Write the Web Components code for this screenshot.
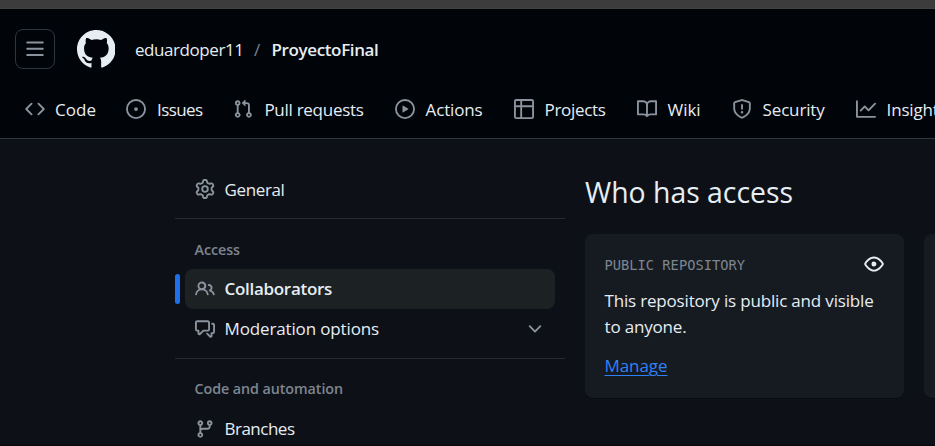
<!DOCTYPE html>
<html lang="en">
<head>
<meta charset="utf-8">
<title>ProyectoFinal settings</title>
<style>
html,body{margin:0;height:100%;overflow:hidden;background:#0d1117}
body{font-family:"Open Sans","Noto Sans",sans-serif;color:#e6edf3;font-size:17px}
</style>
</head>
<body>
<settings-page></settings-page>
<script>
const ICONS = {
 menu:'<path d="M1 2.75A.75.75 0 0 1 1.75 2h12.5a.75.75 0 0 1 0 1.5H1.75A.75.75 0 0 1 1 2.75Zm0 5A.75.75 0 0 1 1.75 7h12.5a.75.75 0 0 1 0 1.5H1.75A.75.75 0 0 1 1 7.75ZM1.75 12h12.5a.75.75 0 0 1 0 1.5H1.75a.75.75 0 0 1 0-1.5Z"/>',
 mark:'<path d="M8 0c4.42 0 8 3.58 8 8a8.013 8.013 0 0 1-5.45 7.59c-.4.08-.55-.17-.55-.38 0-.27.01-1.13.01-2.2 0-.75-.25-1.23-.54-1.48 1.78-.2 3.65-.88 3.65-3.95 0-.88-.31-1.59-.82-2.15.08-.2.36-1.02-.08-2.12 0 0-.67-.22-2.2.82-.64-.18-1.32-.27-2-.27-.68 0-1.36.09-2 .27-1.53-1.03-2.2-.82-2.2-.82-.44 1.1-.16 1.92-.08 2.12-.51.56-.82 1.28-.82 2.15 0 3.06 1.86 3.75 3.64 3.95-.23.2-.44.55-.51 1.07-.46.21-1.61.55-2.33-.66-.15-.24-.6-.83-1.23-.82-.67.01-.27.38.01.53.34.19.73.9.82 1.13.16.45.68 1.31 2.69.94 0 .67.01 1.3.01 1.49 0 .21-.15.45-.55.38A7.995 7.995 0 0 1 0 8c0-4.42 3.58-8 8-8Z"/>',
 code:'<path d="m11.28 3.22 4.25 4.25a.75.75 0 0 1 0 1.06l-4.25 4.25a.749.749 0 0 1-1.275-.326.749.749 0 0 1 .215-.734L13.94 8l-3.72-3.72a.749.749 0 0 1 .326-1.275.749.749 0 0 1 .734.215Zm-6.56 0a.751.751 0 0 1 1.042.018.751.751 0 0 1 .018 1.042L2.06 8l3.72 3.72a.749.749 0 0 1-.326 1.275.749.749 0 0 1-.734-.215L.47 8.53a.75.75 0 0 1 0-1.06Z"/>',
 issue:'<path d="M8 9.5a1.5 1.5 0 1 0 0-3 1.5 1.5 0 0 0 0 3Z"/><path d="M8 0a8 8 0 1 1 0 16A8 8 0 0 1 8 0ZM1.5 8a6.5 6.5 0 1 0 13 0 6.5 6.5 0 0 0-13 0Z"/>',
 pull:'<path d="M1.5 3.25a2.25 2.25 0 1 1 3 2.122v5.256a2.251 2.251 0 1 1-1.5 0V5.372A2.25 2.25 0 0 1 1.5 3.25Zm5.677-.177L9.573.677A.25.25 0 0 1 10 .854V2.5h1A2.5 2.5 0 0 1 13.5 5v5.628a2.251 2.251 0 1 1-1.5 0V5a1 1 0 0 0-1-1h-1v1.646a.25.25 0 0 1-.427.177L7.177 3.427a.25.25 0 0 1 0-.354ZM3.75 2.5a.75.75 0 1 0 0 1.5.75.75 0 0 0 0-1.5Zm0 9.5a.75.75 0 1 0 0 1.5.75.75 0 0 0 0-1.5Zm8.25.75a.75.75 0 1 0 1.5 0 .75.75 0 0 0-1.5 0Z"/>',
 play:'<path d="M8 0a8 8 0 1 1 0 16A8 8 0 0 1 8 0ZM1.5 8a6.5 6.5 0 1 0 13 0 6.5 6.5 0 0 0-13 0Zm4.879-2.773 4.264 2.559a.25.25 0 0 1 0 .428l-4.264 2.559A.25.25 0 0 1 6 10.559V5.442a.25.25 0 0 1 .379-.215Z"/>',
 table:'<path d="M0 1.75C0 .784.784 0 1.75 0h12.5C15.216 0 16 .784 16 1.75v12.5A1.75 1.75 0 0 1 14.25 16H1.75A1.75 1.75 0 0 1 0 14.25ZM6.5 6.5v8h7.75a.25.25 0 0 0 .25-.25V6.5Zm8-1.5V1.75a.25.25 0 0 0-.25-.25H6.5V5Zm-13 1.5v7.75c0 .138.112.25.25.25H5v-8ZM5 5V1.5H1.75a.25.25 0 0 0-.25.25V5Z"/>',
 book:'<path d="M0 1.75A.75.75 0 0 1 .75 1h4.253c1.227 0 2.317.59 3 1.501A3.743 3.743 0 0 1 11.006 1h4.245a.75.75 0 0 1 .75.75v10.5a.75.75 0 0 1-.75.75h-4.507a2.25 2.25 0 0 0-1.591.659l-.622.621a.75.75 0 0 1-1.06 0l-.622-.621A2.25 2.25 0 0 0 5.258 13H.75a.75.75 0 0 1-.75-.75Zm7.251 10.324.004-5.073-.002-2.253A2.25 2.25 0 0 0 5.003 2.5H1.5v9h3.757a3.75 3.75 0 0 1 1.994.574ZM8.755 4.75l-.004 7.322a3.752 3.752 0 0 1 1.992-.572H14.5v-9h-3.495a2.25 2.25 0 0 0-2.25 2.25Z"/>',
 shield:'<path d="M7.467.133a1.748 1.748 0 0 1 1.066 0l5.25 1.68A1.75 1.75 0 0 1 15 3.48V7c0 1.566-.32 3.182-1.303 4.682-.983 1.498-2.585 2.813-5.032 3.855a1.697 1.697 0 0 1-1.33 0c-2.447-1.042-4.049-2.357-5.032-3.855C1.32 10.182 1 8.566 1 7V3.48a1.75 1.75 0 0 1 1.217-1.667Zm.61 1.429a.25.25 0 0 0-.153 0l-5.25 1.68a.25.25 0 0 0-.174.238V7c0 1.358.275 2.666 1.057 3.86.784 1.194 2.121 2.34 4.366 3.297a.196.196 0 0 0 .154 0c2.245-.956 3.582-2.104 4.366-3.298C13.225 9.666 13.5 8.36 13.5 7V3.48a.251.251 0 0 0-.174-.237l-5.25-1.68ZM8.75 4.75v3a.75.75 0 0 1-1.5 0v-3a.75.75 0 0 1 1.5 0ZM9 10.5a1 1 0 1 1-2 0 1 1 0 0 1 2 0Z"/>',
 graph:'<path d="M1.5 1.75V13.5h13.75a.75.75 0 0 1 0 1.5H.75a.75.75 0 0 1-.75-.75V1.75a.75.75 0 0 1 1.5 0Zm14.28 2.53-5.25 5.25a.75.75 0 0 1-1.06 0L7 7.06 4.28 9.78a.751.751 0 0 1-1.042-.018.751.751 0 0 1-.018-1.042l3.25-3.25a.75.75 0 0 1 1.06 0L10 7.94l4.72-4.72a.751.751 0 0 1 1.042.018.751.751 0 0 1 .018 1.042Z"/>',
 gear:'<path d="M8 0a8.2 8.2 0 0 1 .701.031C9.444.095 9.99.645 10.16 1.29l.288 1.107c.018.066.079.158.212.224.231.114.454.243.668.386.123.082.233.09.299.071l1.103-.303c.644-.176 1.392.021 1.82.63.27.385.506.792.704 1.218.315.675.111 1.422-.364 1.891l-.814.806c-.049.048-.098.147-.088.294.016.257.016.515 0 .772-.01.147.038.246.088.294l.814.806c.475.469.679 1.216.364 1.891a7.977 7.977 0 0 1-.704 1.217c-.428.61-1.176.807-1.82.63l-1.102-.302c-.067-.019-.177-.011-.3.071a5.909 5.909 0 0 1-.668.386c-.133.066-.194.158-.211.224l-.29 1.106c-.168.646-.715 1.196-1.458 1.26a8.006 8.006 0 0 1-1.402 0c-.743-.064-1.289-.614-1.458-1.26l-.289-1.106c-.018-.066-.079-.158-.212-.224a5.738 5.738 0 0 1-.668-.386c-.123-.082-.233-.09-.299-.071l-1.103.303c-.644.176-1.392-.021-1.82-.63a8.12 8.12 0 0 1-.704-1.218c-.315-.675-.111-1.422.363-1.891l.815-.806c.05-.048.098-.147.088-.294a6.214 6.214 0 0 1 0-.772c.01-.147-.038-.246-.088-.294l-.815-.806C.635 6.045.431 5.298.746 4.623a7.92 7.92 0 0 1 .704-1.217c.428-.61 1.176-.807 1.82-.63l1.102.302c.067.019.177.011.3-.071.214-.143.437-.272.668-.386.133-.066.194-.158.211-.224l.29-1.106C6.009.645 6.556.095 7.299.03 7.53.01 7.764 0 8 0Zm-.571 1.525c-.036.003-.108.036-.137.146l-.289 1.105c-.147.561-.549.967-.998 1.189-.173.086-.34.183-.5.29-.417.278-.97.423-1.529.27l-1.103-.303c-.109-.03-.175.016-.195.045-.22.312-.412.644-.573.99-.014.031-.021.11.059.19l.815.806c.411.406.562.957.53 1.456a4.709 4.709 0 0 0 0 .582c.032.499-.119 1.05-.53 1.456l-.815.806c-.081.08-.073.159-.059.19.162.346.353.677.573.989.02.03.085.076.195.046l1.102-.303c.56-.153 1.113-.008 1.53.27.161.107.328.204.501.29.447.222.85.629.997 1.189l.289 1.105c.029.109.101.143.137.146a6.6 6.6 0 0 0 1.142 0c.036-.003.108-.036.137-.146l.289-1.105c.147-.561.549-.967.998-1.189.173-.086.34-.183.5-.29.417-.278.97-.423 1.529-.27l1.103.303c.109.029.175-.016.195-.045.22-.313.411-.644.573-.99.014-.031.021-.11-.059-.19l-.815-.806c-.411-.406-.562-.957-.53-1.456a4.709 4.709 0 0 0 0-.582c-.032-.499.119-1.05.53-1.456l.815-.806c.081-.08.073-.159.059-.19a6.464 6.464 0 0 0-.573-.989c-.02-.03-.085-.076-.195-.046l-1.102.303c-.56.153-1.113.008-1.53-.27a4.44 4.44 0 0 0-.501-.29c-.447-.222-.85-.629-.997-1.189l-.289-1.105c-.029-.11-.101-.143-.137-.146a6.6 6.6 0 0 0-1.142 0ZM11 8a3 3 0 1 1-6 0 3 3 0 0 1 6 0ZM9.5 8a1.5 1.5 0 1 0-3.001.001A1.5 1.5 0 0 0 9.5 8Z"/>',
 people:'<path d="M2 5.5a3.5 3.5 0 1 1 5.898 2.549 5.508 5.508 0 0 1 3.034 4.084.75.75 0 1 1-1.482.235 4 4 0 0 0-7.9 0 .75.75 0 0 1-1.482-.236A5.507 5.507 0 0 1 3.102 8.05 3.493 3.493 0 0 1 2 5.5ZM11 4a3.001 3.001 0 0 1 2.22 5.018 5.01 5.01 0 0 1 2.56 3.012.749.749 0 0 1-.885.954.752.752 0 0 1-.549-.514 3.507 3.507 0 0 0-2.522-2.372.75.75 0 0 1-.574-.73v-.352a.75.75 0 0 1 .416-.672A1.5 1.5 0 0 0 11 5.5.75.75 0 0 1 11 4Zm-5.5-.5a2 2 0 1 0-.001 3.999A2 2 0 0 0 5.5 3.5Z"/>',
 discuss:'<path d="M1.75 1h8.5c.966 0 1.75.784 1.75 1.75v5.5A1.75 1.75 0 0 1 10.25 10H7.061l-2.574 2.573A1.458 1.458 0 0 1 2 11.543V10h-.25A1.75 1.75 0 0 1 0 8.25v-5.5C0 1.784.784 1 1.75 1ZM1.5 2.75v5.5c0 .138.112.25.25.25h1a.75.75 0 0 1 .75.75v2.19l2.72-2.72a.749.749 0 0 1 .53-.22h3.5a.25.25 0 0 0 .25-.25v-5.5a.25.25 0 0 0-.25-.25h-8.5a.25.25 0 0 0-.25.25Zm13 2a.25.25 0 0 0-.25-.25h-.5a.75.75 0 0 1 0-1.5h.5c.966 0 1.75.784 1.75 1.75v5.5A1.75 1.75 0 0 1 14.25 12H14v1.543a1.458 1.458 0 0 1-2.487 1.03L9.22 12.28a.749.749 0 0 1 .326-1.275.749.749 0 0 1 .734.215l2.22 2.22v-2.19a.75.75 0 0 1 .75-.75h1a.25.25 0 0 0 .25-.25Z"/>',
 branch:'<path d="M9.5 3.25a2.25 2.25 0 1 1 3 2.122V6A2.5 2.5 0 0 1 10 8.5H6a1 1 0 0 0-1 1v1.128a2.251 2.251 0 1 1-1.5 0V5.372a2.25 2.25 0 1 1 1.5 0v1.836A2.493 2.493 0 0 1 6 7h4a1 1 0 0 0 1-1v-.628A2.25 2.25 0 0 1 9.5 3.25Zm-6 0a.75.75 0 1 0 1.5 0 .75.75 0 0 0-1.5 0Zm8.25-.75a.75.75 0 1 0 0 1.5.75.75 0 0 0 0-1.5ZM4.25 12a.75.75 0 1 0 0 1.5.75.75 0 0 0 0-1.5Z"/>',
 chevron:'<path d="M12.78 5.22a.749.749 0 0 1 0 1.06l-4.25 4.25a.749.749 0 0 1-1.06 0L3.22 6.28a.749.749 0 1 1 1.06-1.06L8 8.939l3.72-3.719a.749.749 0 0 1 1.06 0Z"/>',
 eye:'<path d="M8 2c1.981 0 3.671.992 4.933 2.078 1.27 1.091 2.187 2.345 2.637 3.023a1.62 1.62 0 0 1 0 1.798c-.45.678-1.367 1.932-2.637 3.023C11.67 13.008 9.981 14 8 14c-1.981 0-3.671-.992-4.933-2.078C1.797 10.83.88 9.576.43 8.898a1.62 1.62 0 0 1 0-1.798c.45-.677 1.367-1.931 2.637-3.022C4.33 2.992 6.019 2 8 2ZM1.679 7.932a.12.12 0 0 0 0 .136c.411.622 1.241 1.75 2.366 2.717C5.176 11.758 6.527 12.5 8 12.5c1.473 0 2.825-.742 3.955-1.715 1.124-.967 1.954-2.096 2.366-2.717a.12.12 0 0 0 0-.136c-.412-.621-1.242-1.75-2.366-2.717C10.824 4.242 9.473 3.5 8 3.5c-1.473 0-2.825.742-3.955 1.715-1.124.967-1.954 2.096-2.366 2.717ZM8 10a2 2 0 1 1-.001-3.999A2 2 0 0 1 8 10Z"/>'
};
function define(name, html, ready) {
  const t = document.createElement('template');
  t.innerHTML = html;
  customElements.define(name, class extends HTMLElement {
    connectedCallback() {
      if (this.shadowRoot) return;
      this.attachShadow({mode: 'open'}).append(t.content.cloneNode(true));
      if (ready) ready(this, this.shadowRoot);
    }
  });
}
define('ui-icon', `<style>:host{display:block;flex:none;width:var(--s,20px);height:var(--s,20px);color:#8b949e}svg{display:block;width:100%;height:100%;fill:currentColor}</style><svg viewBox="0 0 16 16"></svg>`,
  (h, r) => { r.querySelector('svg').innerHTML = ICONS[h.getAttribute('name')]; });

/* A single line of text, tracked so that it fills the width given in "w". */
define('ui-text', `<style>:host{display:block;flex:none;white-space:pre}span{display:inline-block;font-kerning:normal;text-decoration:inherit;text-underline-offset:inherit}</style><span></span>`,
  (h, r) => {
    const s = r.querySelector('span'), w = +h.getAttribute('w');
    s.textContent = h.getAttribute('text');
    h.style.width = w + 'px';
    s.style.letterSpacing = (w - s.getBoundingClientRect().width) / s.textContent.length + 'px';
  });

define('nav-tab', `<style>:host{display:flex;flex:none;align-items:center;gap:11px;height:40px}</style>`,
  (h, r) => {
    const i = document.createElement('ui-icon'), t = document.createElement('ui-text');
    i.setAttribute('name', h.getAttribute('icon'));
    t.setAttribute('text', h.getAttribute('label'));
    t.setAttribute('w', h.getAttribute('w'));
    r.append(i, t);
  });

define('app-header', `<style>
:host{display:block;box-sizing:border-box;height:130px;background:#010409;border-bottom:1px solid #30363d;overflow:hidden}
.top{display:flex;align-items:center;padding:20px 0 0 15px;height:40px}
.menu{box-sizing:border-box;width:40px;height:40px;border:1px solid #30363d;border-radius:8px;display:grid;place-items:center;margin-right:21.5px}
.mark{--s:38.6px;color:#e6edf3;margin-right:19.9px}
.sep{color:#7d8590;margin:0 10.5px}
.bold{font-weight:600}
nav{display:flex;gap:31px;padding:20px 0 0 25px}
nav-tab:first-child{gap:10px;margin-right:-1px}
</style>
<div class="top"><div class="menu"><ui-icon name="menu"></ui-icon></div><ui-icon class="mark" name="mark"></ui-icon>
<ui-text text="eduardoper11" w="108.5"></ui-text><ui-text class="sep" text="/" w="7"></ui-text><ui-text class="bold" text="ProyectoFinal" w="107"></ui-text></div>
<nav><nav-tab icon="code" label="Code" w="41"></nav-tab><nav-tab icon="issue" label="Issues" w="45.4"></nav-tab><nav-tab icon="pull" label="Pull requests" w="99.2"></nav-tab><nav-tab icon="play" label="Actions" w="57"></nav-tab><nav-tab icon="table" label="Projects" w="61"></nav-tab><nav-tab icon="book" label="Wiki" w="33"></nav-tab><nav-tab icon="shield" label="Security" w="62"></nav-tab><nav-tab icon="graph" label="Insights" w="60"></nav-tab></nav>`);

define('side-item', `<style>
:host{display:flex;align-items:center;height:40px;gap:5px}
i{width:5px;height:30px;border-radius:4px}
.row{display:flex;flex:1;align-items:center;gap:9.5px;height:40px;box-sizing:border-box;padding:0 10px;border-radius:8px;margin-right:10px}
.row ui-text{padding-bottom:2px}
:host(:first-of-type) .row ui-text{padding-bottom:0}
.row ui-icon:last-child:not(:first-child){margin-left:auto}
:host([active]) i{background:#1f6feb}
:host([active]) .row{background:#1c2124;font-weight:600}
</style><i></i><div class="row"></div>`,
  (h, r) => {
    const a = n => h.getAttribute(n);
    r.querySelector('.row').innerHTML = `<ui-icon name="${a('icon')}"></ui-icon><ui-text text="${a('label')}" w="${a('w')}"></ui-text>` + (h.hasAttribute('expand') ? '<ui-icon name="chevron"></ui-icon>' : '');
  });

define('side-nav', `<style>
:host{display:block;flex:none;width:390px;padding-top:30px}
hr{border:0;height:1px;background:#262b32;margin:9px 0 20px}
.h{height:22px;line-height:21px;margin:0 0 8px 19.5px;font-size:14.3px;font-weight:600;color:#7d8590}
.up{line-height:19px}
</style>
<side-item icon="gear" label="General" w="60"></side-item><hr>
<ui-text class="h" text="Access" w="45.5"></ui-text>
<side-item active icon="people" label="Collaborators" w="107.5"></side-item>
<side-item expand icon="discuss" label="Moderation options" w="154.5"></side-item><hr>
<ui-text class="h up" text="Code and automation" w="148.5"></ui-text>
<side-item icon="branch" label="Branches" w="70"></side-item>`);

define('access-card', `<style>
:host{display:block;flex:none;box-sizing:border-box;width:319px;height:164px;border-radius:8px;background:#161b22;padding:20px;box-shadow:0 1px 0 #0a0c10}
.head{display:flex;justify-content:space-between;align-items:center;height:20px;margin-bottom:14px}
.cap{font:13.7px "DejaVu Sans Mono",monospace;color:#7d8590;padding-top:2px;margin-left:-.5px}
.head ui-icon{color:#e6edf3}
.line,.link{margin-left:-.5px}
.line{line-height:26px;height:26px}
.link{margin-top:13px;line-height:26px;color:#2f81f7;text-decoration:underline 1px;text-underline-offset:3px}
</style><slot></slot>`, (h, r) => {
  if (h.hasAttribute('empty')) return;
  const d = document.createElement('div');
  d.innerHTML = `<div class="head"><ui-text class="cap" text="PUBLIC REPOSITORY" w="140.5"></ui-text><ui-icon name="eye"></ui-icon></div>
<ui-text class="line" text="This repository is public and visible" w="269"></ui-text>
<ui-text class="line" text="to anyone." w="82"></ui-text>
<ui-text class="link" text="Manage" w="63"></ui-text>`;
  r.append(d);
});

define('settings-page', `<style>
:host{display:block;width:935px;height:446px;overflow:hidden;box-sizing:border-box;border-bottom:1px solid #05070a}
.strip{box-sizing:border-box;height:9px;background:#3c3c3c;border-bottom:1px solid #424242}
main{display:flex;gap:20px;padding-left:175px}
section{padding-top:33px}
.title{font-size:28.4px;line-height:40px;height:40px;margin-bottom:22px}
.cards{display:flex;gap:20px}
</style>
<div class="strip"></div><app-header></app-header>
<main><side-nav></side-nav><section><ui-text class="title" text="Who has access" w="208"></ui-text><div class="cards"><access-card></access-card><access-card empty></access-card></div></section></main>`);
</script>
</body>
</html>
